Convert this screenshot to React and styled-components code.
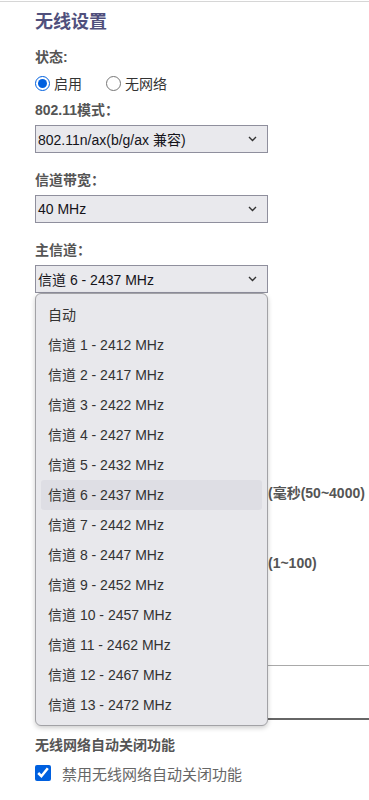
import React from 'react';
import styled, { createGlobalStyle } from 'styled-components';

const GlobalStyle = createGlobalStyle`
    html, body {
        margin: 0;
        padding: 0;
        background: #ffffff;
        overflow: hidden;
    }
    body {
        font-family: "Liberation Sans", "Noto Sans CJK SC", sans-serif;
        color: #333;
    }
`

const Page = styled.div`
    width: 369px;
    margin-top: 1px;
    border-top: 1px solid #d6d6d6;
    padding: 8px 0 0 35px;
    box-sizing: border-box;
`

const Title = styled.h2`
    margin: 0 0 13px 0;
    font-size: 18px;
    line-height: 24px;
    font-weight: bold;
    color: #50507c;
`

const Field = styled.div`
    position: relative;
    margin-bottom: ${props => props.gap ?? 17}px;
`

const Label = styled.div`
    display: grid;
    grid-template-columns: 233px auto;
    font-size: 14px;
    line-height: 20px;
    font-weight: bold;
    color: #555;
    white-space: nowrap;
    margin-bottom: ${props => props.gap ?? 5}px;
`

const RadioRow = styled.div`
    display: flex;
    align-items: center;
    gap: 24px;
    height: 20px;
    margin-bottom: 7px;
`

const RadioLabel = styled.label`
    display: flex;
    align-items: center;
    gap: 4px;
    font-size: 14px;
    color: #333;
    input {
        margin: 0;
        width: 15px;
        height: 15px;
        accent-color: #0060df;
    }
`

const SelectBox = styled.div`
    position: relative;
    display: flex;
    align-items: center;
    justify-content: space-between;
    width: 233px;
    height: 28px;
    box-sizing: border-box;
    padding: 0 10px 0 2px;
    background: #e9e9ed;
    border: 1px solid #8f8f9d;
    font-size: 14px;
    color: #15141a;
`

const Chevron = () => (
    <svg width="9" height="6" viewBox="0 0 9 6">
        <path d="M1 1 L4.5 4.5 L8 1" fill="none" stroke="#333" strokeWidth="1.4" />
    </svg>
)

const Dropdown = styled.ul`
    position: absolute;
    z-index: 10;
    top: calc(100% + 1px);
    left: -1px;
    width: 233px;
    box-sizing: border-box;
    margin: 0;
    padding: 6px 5px 5px 5px;
    list-style: none;
    background: #e8e8ec;
    border: 1px solid #a2a2a6;
    border-radius: 6px;
    box-shadow: 0 2px 5px rgba(0, 0, 0, 0.2);
`

const Option = styled.li`
    height: 30px;
    line-height: 30px;
    padding-left: 7px;
    border-radius: 3px;
    font-size: 14px;
    color: #333;
    background: ${props => props.active ? '#dedee4' : 'transparent'};
`

const TextInput = styled.input`
    width: 140px;
    height: 28px;
    box-sizing: border-box;
    border: 1px solid #8f8f9d;
    font-size: 14px;
`

const Hidden = styled.div`
    padding-top: 190px;
`

const Divider = styled.div`
    height: 1px;
    background: #a9a9a9;
    margin: 59px 0 0 0;
`

const Box = styled.div`
    height: 52px;
    border-bottom: 2px solid #666;
    margin-bottom: 15px;
`

const CheckRow = styled.label`
    display: flex;
    align-items: center;
    gap: 11px;
    height: 20px;
    margin-top: 8px;
    font-size: 15px;
    color: #666;
    input {
        margin: 0;
        width: 16px;
        height: 16px;
        accent-color: #0060df;
    }
`

const channels = [1, 2, 3, 4, 5, 6, 7, 8, 9, 10, 11, 12, 13].map(n => ({
    n,
    text: `信道 ${n} - ${2407 + n * 5} MHz`,
}))

export default function App () {
    return (
        <>
            <GlobalStyle />
            <Page>
                <Title>无线设置</Title>
                <Label gap={6}>状态:</Label>
                <RadioRow>
                    <RadioLabel><input type="radio" name="st" defaultChecked />启用</RadioLabel>
                    <RadioLabel><input type="radio" name="st" />无网络</RadioLabel>
                </RadioRow>
                <Field>
                    <Label>802.11模式：</Label>
                    <SelectBox>802.11n/ax(b/g/ax 兼容)<Chevron /></SelectBox>
                </Field>
                <Field>
                    <Label>信道带宽：</Label>
                    <SelectBox>40 MHz<Chevron /></SelectBox>
                </Field>
                <Field gap={0}>
                    <Label>主信道：</Label>
                    <SelectBox>
                        信道 6 - 2437 MHz<Chevron />
                        <Dropdown>
                            <Option>自动</Option>
                            {channels.map(c => (
                                <Option key={c.n} active={c.n === 6}>{c.text}</Option>
                            ))}
                        </Dropdown>
                    </SelectBox>
                </Field>
                <Hidden>
                    <Field>
                        <Label><span /><span>(毫秒(50~4000)</span></Label>
                        <TextInput />
                    </Field>
                    <Field gap={0}>
                        <Label><span /><span>(1~100)</span></Label>
                        <TextInput />
                    </Field>
                    <Divider />
                    <Box />
                </Hidden>
                <Label gap={0}>无线网络自动关闭功能</Label>
                <CheckRow><input type="checkbox" defaultChecked />禁用无线网络自动关闭功能</CheckRow>
            </Page>
        </>
    )
}
